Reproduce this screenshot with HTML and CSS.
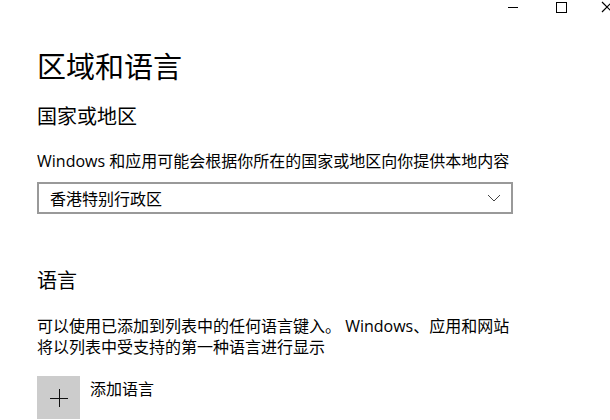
FILE: index.html
```html
<!DOCTYPE html>
<html lang="zh-CN">
<head>
  <meta charset="UTF-8" />
  <title>区域和语言</title>
  <link rel="stylesheet" href="styles.css">
</head>
<body>
  <div class="titlebar">
    <span class="ctl">
      <svg width="12" height="12" viewBox="0 0 12 12"><path d="M1 6.5h10" stroke="#000" stroke-width="1"/></svg>
    </span>
    <span class="ctl">
      <svg width="12" height="12" viewBox="0 0 12 12"><rect x="1.5" y="1.5" width="10" height="10" fill="none" stroke="#000" stroke-width="1"/></svg>
    </span>
    <span class="ctl-close">
      <svg width="12" height="12" viewBox="0 0 12 12"><path d="M1 1l10 10M11 1L1 11" stroke="#000" stroke-width="1.2"/></svg>
    </span>
  </div>

  <div class="page">
    <h1>区域和语言</h1>

    <h2>国家或地区</h2>
    <p class="desc">Windows 和应用可能会根据你所在的国家或地区向你提供本地内容</p>
    <div class="select">
      <span>香港特别行政区</span>
      <svg width="14" height="8" viewBox="0 0 14 8"><path d="M1 1l6 6 6-6" fill="none" stroke="#444" stroke-width="1"/></svg>
    </div>

    <h2 class="lang-title">语言</h2>
    <p class="lang-desc">可以使用已添加到列表中的任何语言键入。 Windows、应用和网站将以列表中受支持的第一种语言进行显示</p>

    <div class="add-row">
      <div class="add-btn">
        <svg width="18" height="18" viewBox="0 0 18 18"><path d="M0 9.5h18M9.5 0v18" stroke="#111" stroke-width="1"/></svg>
      </div>
      <span class="add-label">添加语言</span>
    </div>
  </div>
</body>
</html>
```

FILE: styles.css
```css
* {
  margin: 0;
  padding: 0;
  box-sizing: border-box;
}

html, body {
  height: 100%;
  overflow: hidden;
  background: #ffffff;
}

body {
  font-family: "Open Sans", "Noto Sans CJK SC", sans-serif;
  color: #000;
}

/* window buttons, the close one is cut off by the edge */
.titlebar {
  height: 32px;
  display: flex;
  justify-content: flex-end;
  align-items: flex-start;
  padding-top: 1px;
}

.ctl {
  width: 48px;
  display: flex;
  justify-content: center;
}

.ctl svg {
  display: block;
}

.ctl-close {
  display: block;
  width: 25px;
  padding-left: 16px;
  overflow: hidden;
}

.ctl-close svg {
  display: block;
}

.page {
  padding-left: 37px;
  width: 513px;
}

h1 {
  font-size: 29px;
  font-weight: 400;
  line-height: 40px;
  margin-top: 15px;
}

h2 {
  font-size: 20px;
  font-weight: 400;
  line-height: 28px;
  margin-top: 16px;
}

.desc {
  font-size: 16px;
  line-height: 22px;
  margin-top: 19px;
  white-space: nowrap;
}

.select {
  margin-top: 10px;
  height: 32px;
  border: 2px solid #999;
  display: flex;
  align-items: center;
  justify-content: space-between;
  padding: 0 10px 0 11px;
  font-size: 16px;
}

.lang-title {
  margin-top: 53px;
}

.lang-desc {
  font-size: 16px;
  line-height: 21px;
  margin-top: 21px;
}

.add-row {
  display: flex;
  align-items: flex-start;
  gap: 10px;
  margin-top: 18px;
}

.add-btn {
  width: 43px;
  height: 43px;
  background: #cccccc;
  display: flex;
  align-items: center;
  justify-content: center;
}

.add-label {
  font-size: 16px;
  line-height: 22px;
  margin-top: 2px;
}
```
